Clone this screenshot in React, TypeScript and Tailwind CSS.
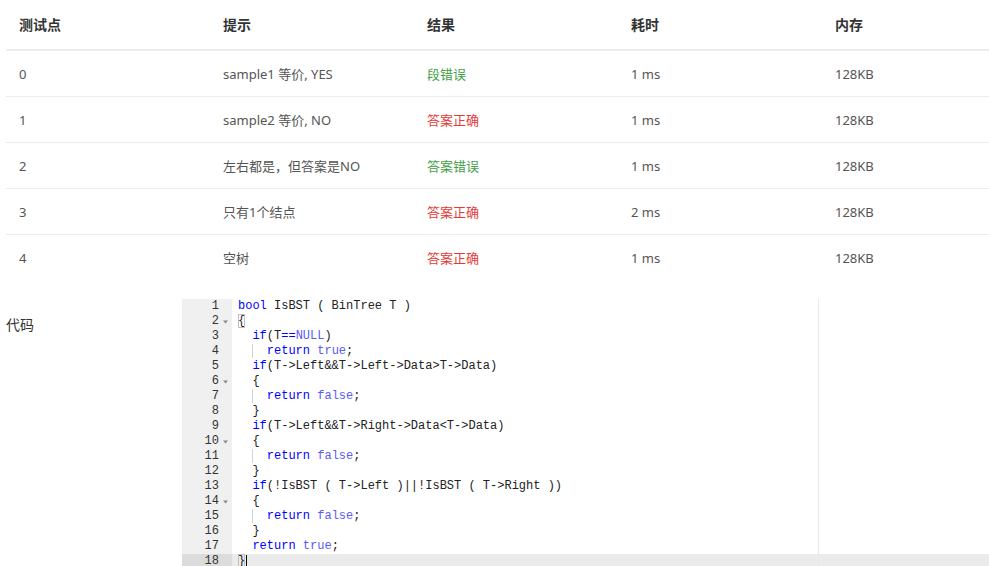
import React from "react"

type Tok = [string, string?]

const kw = "text-[#0000ff]"
const cn = "text-[#585cf6]"

const code: { toks: Tok[]; guide?: boolean; fold?: boolean; box?: boolean }[] = [
  { toks: [["bool", kw], [" IsBST ( BinTree T )"]] },
  { toks: [["{"]], fold: true, box: true },
  { toks: [["  "], ["if", kw], ["(T"], ["==", kw], ["NULL", cn], [")"]] },
  { toks: [["return", kw], [" "], ["true", cn], [";"]], guide: true },
  { toks: [["  "], ["if", kw], ["(T->Left&&T->Left->Data>T->Data)"]] },
  { toks: [["  {"]], fold: true },
  { toks: [["return", kw], [" "], ["false", cn], [";"]], guide: true },
  { toks: [["  }"]] },
  { toks: [["  "], ["if", kw], ["(T->Left&&T->Right->Data<T->Data)"]] },
  { toks: [["  {"]], fold: true },
  { toks: [["return", kw], [" "], ["false", cn], [";"]], guide: true },
  { toks: [["  }"]] },
  { toks: [["  "], ["if", kw], ["(!IsBST ( T->Left )||!IsBST ( T->Right ))"]] },
  { toks: [["  {"]], fold: true },
  { toks: [["return", kw], [" "], ["false", cn], [";"]], guide: true },
  { toks: [["  }"]] },
  { toks: [["  "], ["return", kw], [" "], ["true", cn], [";"]] },
  { toks: [["}"]], box: true },
]

const rows = [
  { id: "0", hint: "sample1 等价, YES", res: "段错误", ok: false, time: "1 ms", mem: "128KB" },
  { id: "1", hint: "sample2 等价, NO", res: "答案正确", ok: true, time: "1 ms", mem: "128KB" },
  { id: "2", hint: "左右都是，但答案是NO", res: "答案错误", ok: false, time: "1 ms", mem: "128KB" },
  { id: "3", hint: "只有1个结点", res: "答案正确", ok: true, time: "2 ms", mem: "128KB" },
  { id: "4", hint: "空树", res: "答案正确", ok: true, time: "1 ms", mem: "128KB" },
]

const cols = "grid grid-cols-[204px_204px_204px_204px_1fr]"

export default function App() {
  return (
    <div className="h-[566px] overflow-hidden bg-white font-['Noto_Sans','Noto_Sans_CJK_SC',sans-serif]">
      <div className="pl-[6px]">
        <div className={`${cols} h-[51px] items-center border-b-2 border-[#ececec] text-[14px] font-bold text-[#333]`}>
          {["测试点", "提示", "结果", "耗时", "内存"].map((h) => (
            <div key={h} className="pl-[13px] pb-[1px]">{h}</div>
          ))}
        </div>
        {rows.map((r, i) => (
          <div
            key={r.id}
            className={`${cols} h-[46px] items-center pt-[2px] text-[13px] text-[#555] ${i < rows.length - 1 ? "border-b border-[#ececec]" : ""}`}
          >
            <div className="pl-[13px]">{r.id}</div>
            <div className="pl-[13px]">{r.hint}</div>
            <div className={`pl-[13px] ${r.ok ? "text-[#e53935]" : "text-[#43a047]"}`}>{r.res}</div>
            <div className="pl-[13px]">{r.time}</div>
            <div className="pl-[13px]">{r.mem}</div>
          </div>
        ))}
      </div>

      <div className="mt-[18px] flex pl-[6px]">
        <div className="w-[176px] pt-[16px] text-[14px] leading-[20px] text-[#333]">代码</div>
        <div className="relative flex flex-1 font-['Liberation_Mono',monospace] text-[12px] leading-[15px]">
          <div className="w-[50px] bg-[#f0f0f0] text-[#333]">
            {code.map((l, i) => (
              <div key={i} className={`flex h-[15px] ${i === 17 ? "bg-[#dcdcdc]" : ""}`}>
                <span className="flex-1 text-right">{i + 1}</span>
                <span className="flex w-[13px] items-center justify-center">
                  {l.fold && (
                    <svg width="5" height="4" viewBox="0 0 5 4">
                      <path d="M0 0.5h5L2.5 3.5z" fill="#888" />
                    </svg>
                  )}
                </span>
              </div>
            ))}
          </div>
          <div className="flex-1 pl-[6px] text-[#222]">
            {code.map((l, i) => (
              <div key={i} className={`relative -ml-[6px] h-[15px] whitespace-pre pl-[6px] ${i === 17 ? "bg-[#ebebeb]" : ""}`}>
                {l.guide && (
                  <>
                    <span>{"  "}</span>
                    <span className="shadow-[inset_1px_0_0_#d4d4d4]">{"  "}</span>
                  </>
                )}
                {l.toks.map(([t, c], j) =>
                  l.box ? (
                    <span key={j} className="outline outline-1 -outline-offset-1 outline-[#c0c0c0]">{t}</span>
                  ) : (
                    <span key={j} className={c}>{t}</span>
                  )
                )}
                {i === 17 && <span className="absolute top-[1px] left-[14px] h-[13px] w-px bg-black" />}
              </div>
            ))}
          </div>
          <div className="absolute top-0 bottom-0 left-[636px] w-px bg-[#e8e8e8]" />
        </div>
      </div>
    </div>
  )
}
